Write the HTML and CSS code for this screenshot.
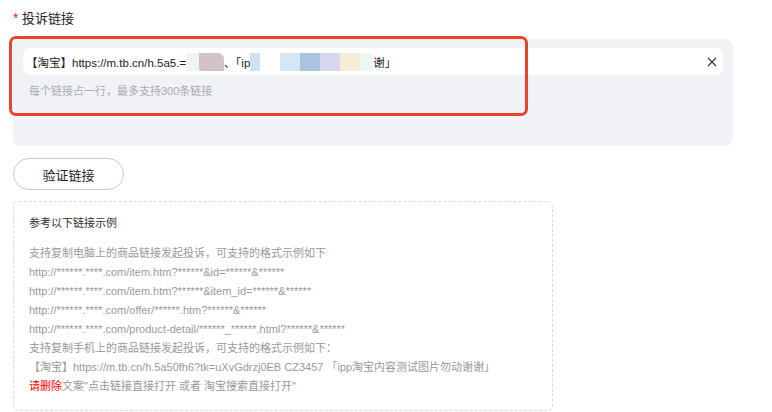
FILE: index.html
```html
<!DOCTYPE html>
<html lang="zh-CN">
<head>
    <meta charset="UTF-8">
    <meta name="viewport" content="width=device-width, initial-scale=1.0">
    <title>投诉链接</title>
    <link rel="stylesheet" href="styles.css">
</head>
<body>
    <div class="page">
        <div class="label"><span class="star">*</span> 投诉链接</div>

        <div class="panel">
            <div class="input">
                <span class="value">【淘宝】https://m.tb.cn/h.5a5.=<span class="blur b1"></span><span class="blur b2"></span>、「ip<span class="blur b3"></span><span class="blur b4"></span><span class="blur b5"></span><span class="blur b6"></span><span class="blur b7"></span><span class="blur b8"></span><span class="blur b9"></span>谢」</span>
                <svg class="clear" width="10" height="10" viewBox="0 0 10 10">
                    <path d="M1 1L9 9M9 1L1 9" stroke="#333" stroke-width="1.1" fill="none"/>
                </svg>
            </div>
            <div class="hint">每个链接占一行，最多支持300条链接</div>
            <!-- 标注框 -->
            <div class="mark"></div>
        </div>

        <button class="btn">验证链接</button>

        <div class="example">
            <div class="example-title">参考以下链接示例</div>
            <ul class="example-list">
                <li>支持复制电脑上的商品链接发起投诉，可支持的格式示例如下</li>
                <li>http://******.****.com/item.htm?******&amp;id=******&amp;******</li>
                <li>http://******.****.com/item.htm?******&amp;item_id=******&amp;******</li>
                <li>http://******.****.com/offer/******.htm?******&amp;******</li>
                <li>http://******.****.com/product-detail/******_******.html?******&amp;******</li>
                <li>支持复制手机上的商品链接发起投诉，可支持的格式示例如下：</li>
                <li>【淘宝】https://m.tb.cn/h.5a50fh6?tk=uXvGdrzj0EB CZ3457 「ipp淘宝内容测试图片勿动谢谢」</li>
                <li><span class="red">请删除</span>文案"点击链接直接打开 或者 淘宝搜索直接打开"</li>
            </ul>
        </div>
    </div>
</body>
</html>
```

FILE: styles.css
```css
body {
    margin: 0;
    background: #fff;
    font-family: "Liberation Sans", "Noto Sans CJK SC", sans-serif;
    color: #333;
}

.page {
    padding: 8px 13px;
    width: 720px;
}

.label {
    font-size: 13px;
    line-height: 20px;
    color: #222;
    margin-bottom: 10px;
}

.star {
    color: #f5222d;
    font-size: 14px;
}

.panel {
    position: relative;
    background: #f1f2f6;
    border-radius: 8px;
    height: 107px;
    padding: 9px 10px;
    box-sizing: border-box;
}

.input {
    display: flex;
    align-items: center;
    justify-content: space-between;
    height: 27px;
    background: #fff;
    border-radius: 8px;
    padding: 0 6px 0 3px;
    font-size: 11.5px;
    color: #222;
}

.value {
    display: flex;
    align-items: center;
    white-space: nowrap;
}

.blur {
    display: inline-block;
    height: 18px;
}
.b1 { width: 13px; background: #eef3f7; }
.b2 { width: 25px; background: #d3c3c7; border-radius: 0 6px 0 2px; }
.b3 { width: 10px; background: #cfe0f2; }
.b4 { width: 20px; background: #fff; }
.b5 { width: 20px; background: #d5e6f7; }
.b6 { width: 20px; background: #a9c4e0; }
.b7 { width: 20px; background: #d8d8ec; }
.b8 { width: 20px; background: #f6ecda; }
.b9 { width: 13px; background: #eafaf3; }

.clear {
    flex-shrink: 0;
}

.hint {
    margin-top: 8px;
    padding-left: 6px;
    font-size: 11px;
    line-height: 17px;
    color: #a9abb3;
}

.mark {
    position: absolute;
    left: -4px;
    top: -3px;
    width: 519px;
    height: 80px;
    border: 3px solid #e8432d;
    border-radius: 7px;
    box-sizing: border-box;
}

.btn {
    display: block;
    margin-top: 12px;
    width: 111px;
    height: 32px;
    background: #fff;
    border: 1px solid #c9cad2;
    border-radius: 16px;
    font-family: inherit;
    font-size: 13px;
    color: #222;
    cursor: pointer;
}

.example {
    margin-top: 11px;
    width: 540px;
    height: 210px;
    border: 1px dashed #d9d9d9;
    border-radius: 6px;
    padding: 12px 15px;
    box-sizing: border-box;
}

.example-title {
    font-size: 11px;
    line-height: 19px;
    color: #333;
}

.example-list {
    list-style: none;
    margin: 11px 0 0;
    padding: 0;
}

.example-list li {
    font-size: 11px;
    line-height: 19px;
    color: #999;
    white-space: nowrap;
}

.red {
    color: #f00;
}
```
